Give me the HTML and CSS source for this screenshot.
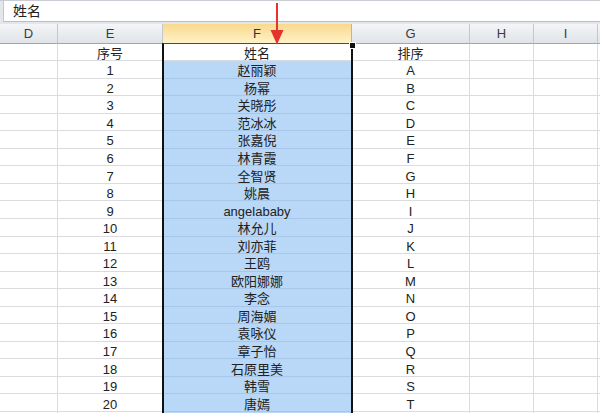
FILE: index.html
```html
<!DOCTYPE html>
<html lang="zh">
<head>
<meta charset="utf-8">
<link rel="stylesheet" href="styles.css">
</head>
<body>
<div class="app">
  <div class="fbar"><div class="fbox">姓名</div></div>
  <div class="sheet">
    <div class="row hdr">
      <div class="c">D</div><div class="c">E</div><div class="c sel">F</div><div class="c">G</div><div class="c">H</div><div class="c">I</div><div class="c"></div>
    </div>
    <div class="row"><div class="c"></div><div class="c">序号</div><div class="c f act">姓名</div><div class="c">排序</div><div class="c"></div><div class="c"></div><div class="c"></div></div>
    <div class="row"><div class="c"></div><div class="c">1</div><div class="c f">赵丽颖</div><div class="c">A</div><div class="c"></div><div class="c"></div><div class="c"></div></div>
    <div class="row"><div class="c"></div><div class="c">2</div><div class="c f">杨幂</div><div class="c">B</div><div class="c"></div><div class="c"></div><div class="c"></div></div>
    <div class="row"><div class="c"></div><div class="c">3</div><div class="c f">关晓彤</div><div class="c">C</div><div class="c"></div><div class="c"></div><div class="c"></div></div>
    <div class="row"><div class="c"></div><div class="c">4</div><div class="c f">范冰冰</div><div class="c">D</div><div class="c"></div><div class="c"></div><div class="c"></div></div>
    <div class="row"><div class="c"></div><div class="c">5</div><div class="c f">张嘉倪</div><div class="c">E</div><div class="c"></div><div class="c"></div><div class="c"></div></div>
    <div class="row"><div class="c"></div><div class="c">6</div><div class="c f">林青霞</div><div class="c">F</div><div class="c"></div><div class="c"></div><div class="c"></div></div>
    <div class="row"><div class="c"></div><div class="c">7</div><div class="c f">全智贤</div><div class="c">G</div><div class="c"></div><div class="c"></div><div class="c"></div></div>
    <div class="row"><div class="c"></div><div class="c">8</div><div class="c f">姚晨</div><div class="c">H</div><div class="c"></div><div class="c"></div><div class="c"></div></div>
    <div class="row"><div class="c"></div><div class="c">9</div><div class="c f">angelababy</div><div class="c">I</div><div class="c"></div><div class="c"></div><div class="c"></div></div>
    <div class="row"><div class="c"></div><div class="c">10</div><div class="c f">林允儿</div><div class="c">J</div><div class="c"></div><div class="c"></div><div class="c"></div></div>
    <div class="row"><div class="c"></div><div class="c">11</div><div class="c f">刘亦菲</div><div class="c">K</div><div class="c"></div><div class="c"></div><div class="c"></div></div>
    <div class="row"><div class="c"></div><div class="c">12</div><div class="c f">王鸥</div><div class="c">L</div><div class="c"></div><div class="c"></div><div class="c"></div></div>
    <div class="row"><div class="c"></div><div class="c">13</div><div class="c f">欧阳娜娜</div><div class="c">M</div><div class="c"></div><div class="c"></div><div class="c"></div></div>
    <div class="row"><div class="c"></div><div class="c">14</div><div class="c f">李念</div><div class="c">N</div><div class="c"></div><div class="c"></div><div class="c"></div></div>
    <div class="row"><div class="c"></div><div class="c">15</div><div class="c f">周海媚</div><div class="c">O</div><div class="c"></div><div class="c"></div><div class="c"></div></div>
    <div class="row"><div class="c"></div><div class="c">16</div><div class="c f">袁咏仪</div><div class="c">P</div><div class="c"></div><div class="c"></div><div class="c"></div></div>
    <div class="row"><div class="c"></div><div class="c">17</div><div class="c f">章子怡</div><div class="c">Q</div><div class="c"></div><div class="c"></div><div class="c"></div></div>
    <div class="row"><div class="c"></div><div class="c">18</div><div class="c f">石原里美</div><div class="c">R</div><div class="c"></div><div class="c"></div><div class="c"></div></div>
    <div class="row"><div class="c"></div><div class="c">19</div><div class="c f">韩雪</div><div class="c">S</div><div class="c"></div><div class="c"></div><div class="c"></div></div>
    <div class="row"><div class="c"></div><div class="c">20</div><div class="c f">唐嫣</div><div class="c">T</div><div class="c"></div><div class="c"></div><div class="c"></div></div>
    <div class="row"><div class="c"></div><div class="c"></div><div class="c f"></div><div class="c"></div><div class="c"></div><div class="c"></div><div class="c"></div></div>
    <div class="selframe"></div>
    <div class="handle"></div>
  </div>
  <svg class="arrow" width="20" height="48" viewBox="0 0 20 48">
    <rect x="8" y="3" width="2" height="28" fill="#e5322b"/>
    <polygon points="2.5,30 15.5,30 9,44.5" fill="#e5322b"/>
  </svg>
</div>
</body>
</html>
```
FILE: styles.css
```css
* { box-sizing: border-box; }
html, body { margin: 0; padding: 0; background: #fff; }
body {
  font-family: "Liberation Sans", "Noto Sans CJK SC", sans-serif;
  font-size: 13px;
  color: #222;
  width: 600px;
  height: 413px;
  overflow: hidden;
}
.app { position: relative; width: 600px; height: 413px; overflow: hidden; }
.fbar {
  height: 24px;
  background: #e3e6ea;
  border-top: 1px solid #c9cdd3;
  padding: 0 0 2px 3px;
}
.fbox {
  height: 100%;
  background: #fff;
  border-left: 1px solid #c2c7ce;
  border-bottom: 1px solid #b9bec6;
  padding-left: 9px;
  font-size: 14px;
  line-height: 20px;
  color: #222;
}
.sheet { position: relative; }
.row {
  display: grid;
  grid-template-columns: 58px 105px 189px 118px 64px 64px 40px;
  grid-template-rows: 100%;
  height: 17.55px;
}
.c {
  min-height: 0;
  border-right: 1px solid #dadcdf;
  border-bottom: 1px solid #dadcdf;
  text-align: center;
  padding-top: 3.2px;
  line-height: 14px;
  white-space: nowrap;
}
.hdr { height: 19.5px; }
.hdr .c {
  background: linear-gradient(#f4f5f7, #dfe3e8);
  border-right: 1px solid #c3c8cf;
  border-bottom: 1px solid #9ea6b0;
  color: #3c3c3c;
  padding-top: 1px;
  line-height: 18px;
  font-size: 13px;
}
.hdr .c.sel {
  background: linear-gradient(#f9d98c, #fff2c8);
  border-bottom: 1px solid #e6a53a;
  border-right: 1px solid #d9b35f;
  color: #333;
}
.c.f {
  background: #b9d7f6;
  border-bottom-color: #a7c7ea;
  border-right-color: #b9d7f6;
}
.c.f.act { background: #fff; border-bottom-color: #dadcdf; border-right-color: #dadcdf; }
.selframe {
  position: absolute;
  left: 162px;
  top: 19px;
  width: 191px;
  height: 400px;
  border-left: 2px solid #111;
  border-right: 2px solid #111;
  border-top: 1px solid #4a4a4a;
}
.handle {
  position: absolute;
  left: 349.5px;
  top: 19px;
  width: 5px;
  height: 5px;
  background: #111;
  border: 1px solid #fff;
  box-sizing: content-box;
  margin: -1px;
}
.arrow { position: absolute; left: 268px; top: 0; }
```
